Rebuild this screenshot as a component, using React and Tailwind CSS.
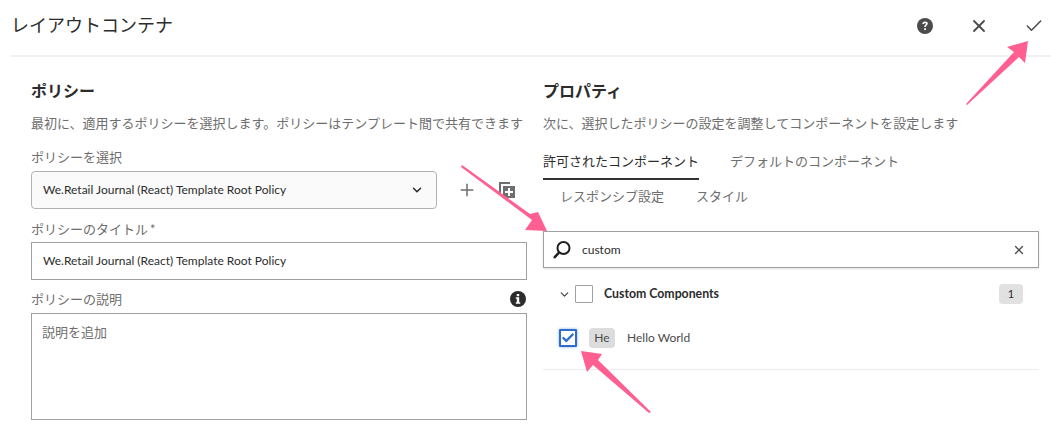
import React from "react";
import { ChevronDown, Plus, X, Check } from "lucide-react";

const FONT = "font-['Lato','Noto_Sans_CJK_JP',sans-serif]";

// Pink annotation arrows drawn over the dialog
function Arrows() {
  return (
    <svg className="absolute left-0 top-0 pointer-events-none" width="1051" height="424">
      <g fill="#ff5f91">
        <polygon points="967,105 966,104 1014,52 1007,47 1028,41 1025,63 1019,57" />
        <polygon points="461,167 462,165 530,214 538,212 547,231 525,230 532,220" />
        <polygon points="651,412 649,413 593,365 587,372 581,351 602,354 598,360" />
      </g>
    </svg>
  );
}

function SearchIcon() {
  return (
    <svg width="20" height="20" viewBox="0 0 20 20" fill="none" stroke="#1f1f1f">
      <circle cx="11.5" cy="8" r="6" strokeWidth="2" />
      <path d="M7 12.5 2 18" strokeWidth="2.6" />
    </svg>
  );
}

function CopyAdd() {
  return (
    <svg width="16" height="16" viewBox="1 1 16 16" fill="#6e6e6e">
      <path d="M1 1h11v2H3v9H1z" />
      <path fillRule="evenodd" d="M5 5h12v12H5zM10 7v3H7v2h3v3h2v-3h3v-2h-3V7z" />
    </svg>
  );
}

function HelpIcon() {
  return (
    <svg width="16" height="16" viewBox="0 0 16 16">
      <circle cx="8" cy="8" r="8" fill="#4b4b4b" />
      <path d="M5.3 6.1c0-1.7 1.2-2.7 2.8-2.7s2.7.9 2.7 2.2c0 1.9-2 1.9-2 3.3H7.2c0-2 1.7-2.1 1.7-3.1 0-.4-.3-.8-.8-.8s-.9.4-.9 1.1z" fill="#fff" />
      <rect x="7.2" y="10.2" width="1.7" height="1.9" fill="#fff" />
    </svg>
  );
}

function InfoIcon() {
  return (
    <svg width="16" height="16" viewBox="0 0 16 16">
      <circle cx="8" cy="8" r="8" fill="#2c2c2c" />
      <rect x="6.8" y="3" width="2.4" height="2.2" fill="#fff" />
      <path d="M5.8 6.3h3.4v5h1v1.4H5.8v-1.4h1v-3.6h-1z" fill="#fff" />
    </svg>
  );
}

function Label({ children }) {
  return <div className="text-[13px] leading-[18px] text-[#6e6e6e]">{children}</div>;
}

export default function App() {
  return (
    <div className={`relative w-[1051px] h-[424px] overflow-hidden bg-white ${FONT}`}>
      {/* Title bar */}
      <div className="ml-[11px] h-[57px] flex items-center border-b-2 border-[#f0f0f0] pb-[6px]">
        <h1 className="text-[18px] leading-[24px] font-normal text-[#2c2c2c]">レイアウトコンテナ</h1>
        <div className="ml-auto flex items-center mt-[3px]">
          <HelpIcon />
          <X size={20} strokeWidth={2.2} className="ml-[36px] text-[#4b4b4b]" />
          <Check size={20} strokeWidth={1.8} className="ml-[35px] mr-[7px] text-[#4b4b4b]" />
        </div>
      </div>

      <div className="flex pl-[31px] pr-[12px] gap-[16px]">
        {/* Left column */}
        <div className="w-[496px]">
          <h2 className="mt-[22px] text-[16px] leading-[24px] font-bold text-[#2c2c2c]">ポリシー</h2>
          <p className="mt-[11px] text-[13px] leading-[18px] text-[#6e6e6e] whitespace-nowrap">
            最初に、適用するポリシーを選択します。ポリシーはテンプレート間で共有できます
          </p>
          <div className="mt-[16px]"><Label>ポリシーを選択</Label></div>
          <div className="mt-[5px] flex items-center">
            <div className="w-[406px] h-[38px] flex items-center justify-between pl-[11px] pr-[12px] rounded-[4px] border border-[#b3b3b3] bg-[#fafafa]">
              <span className="text-[12px] text-[#2c2c2c]">We.Retail Journal (React) Template Root Policy</span>
              <ChevronDown size={14} strokeWidth={2.6} className="text-[#2c2c2c]" />
            </div>
            <Plus size={20} strokeWidth={1.8} className="ml-[20px] text-[#6e6e6e]" />
            <span className="ml-[22px]"><CopyAdd /></span>
          </div>
          <div className="mt-[11px]">
            <Label>ポリシーのタイトル<span className="ml-[2px]">*</span></Label>
          </div>
          <div className="mt-[4px] h-[38px] flex items-center pl-[11px] border border-[#a0a0a0] text-[12px] text-[#2c2c2c]">
            We.Retail Journal (React) Template Root Policy
          </div>
          <div className="mt-[10px] flex items-center justify-between pr-[1px]">
            <Label>ポリシーの説明</Label>
            <InfoIcon />
          </div>
          <div className="mt-[5px] h-[107px] pl-[10px] pt-[9px] border border-[#a0a0a0] text-[13px] leading-[18px] text-[#6e6e6e]">
            説明を追加
          </div>
        </div>

        {/* Right column */}
        <div className="w-[496px]">
          <h2 className="mt-[22px] text-[16px] leading-[24px] font-bold text-[#2c2c2c]">プロパティ</h2>
          <p className="mt-[11px] text-[13px] leading-[18px] text-[#6e6e6e] whitespace-nowrap">
            次に、選択したポリシーの設定を調整してコンポーネントを設定します
          </p>
          <div className="mt-[18px] flex text-[13px] leading-[20px] text-[#6e6e6e]">
            <div className="h-[30px] w-[156px] border-b-2 border-[#323232] text-[#2c2c2c] whitespace-nowrap pt-[1px]">許可されたコンポーネント</div>
            <div className="ml-[31px] pt-[1px] whitespace-nowrap">デフォルトのコンポーネント</div>
          </div>
          <div className="mt-[6px] flex text-[13px] leading-[20px] text-[#6e6e6e] pl-[17px]">
            <span>レスポンシブ設定</span>
            <span className="ml-[32px]">スタイル</span>
          </div>
          {/* Search field */}
          <div className="mt-[25px] h-[37px] flex items-center border border-[#a0a0a0] shadow-[0_1px_2px_rgba(0,0,0,0.12)]">
            <span className="ml-[8px]"><SearchIcon /></span>
            <span className="ml-[10px] text-[12px] text-[#2c2c2c]">custom</span>
            <X size={14} strokeWidth={2.2} className="ml-auto mr-[12px] text-[#4b4b4b]" />
          </div>
          {/* Group row */}
          <div className="mt-[16px] flex items-center h-[20px]">
            <ChevronDown size={13} strokeWidth={2.4} className="ml-[15px] text-[#4b4b4b]" />
            <div className="ml-[4px] w-[18px] h-[18px] border border-[#a0a0a0] rounded-[1px]" />
            <span className="ml-[11px] text-[12.3px] font-bold text-[#2c2c2c]">Custom Components</span>
            <span className="ml-auto mr-[16px] w-[24px] h-[20px] rounded-[4px] bg-[#e1e1e1] flex items-center justify-center text-[11px] text-[#2c2c2c]">1</span>
          </div>
          {/* Component row */}
          <div className="mt-[24px] pb-[21px] border-b border-[#ececec] flex items-center">
            <div className="ml-[16px] w-[18px] h-[18px] border-2 border-[#2f6fc9] rounded-[1px] flex items-center justify-center shadow-[0_0_3px_rgba(47,111,201,0.6)]">
              <Check size={14} strokeWidth={4} className="text-[#2f6fc9]" />
            </div>
            <span className="ml-[12px] w-[26px] h-[20px] rounded-[4px] bg-[#dcdcdc] flex items-center justify-center text-[12px] text-[#4b4b4b]">He</span>
            <span className="ml-[12px] text-[12px] text-[#4b4b4b]">Hello World</span>
          </div>
        </div>
      </div>

      <Arrows />
    </div>
  );
}
